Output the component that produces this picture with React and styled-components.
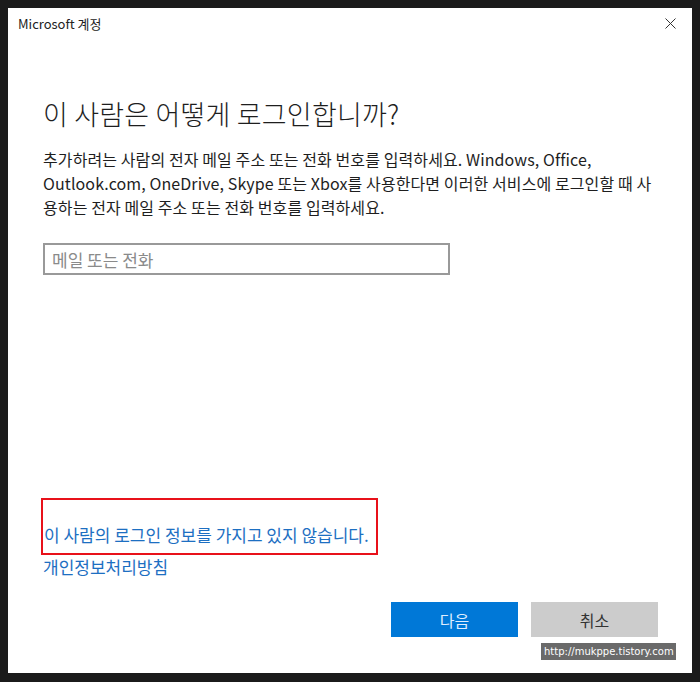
import React from "react";
import styled, { createGlobalStyle } from "styled-components";

const GlobalStyle = createGlobalStyle`
  html, body {
    margin: 0;
    padding: 0;
    background: #1b1b1b;
  }
  body {
    padding: 8px 8px 9px 8px;
    font-family: "Noto Sans CJK KR", "Noto Sans", sans-serif;
  }
`;

const Window = styled.div`
  position: relative;
  width: 684px;
  height: 665px;
  background: #ffffff;
  display: flex;
  flex-direction: column;
  box-sizing: border-box;
`;

const TitleBar = styled.div`
  height: 30px;
  display: flex;
  align-items: center;
  justify-content: space-between;
  padding: 0 16px 0 10px;
`;

const TitleText = styled.span`
  font-size: 13px;
  color: #222;
  margin-top: 1px;
`;

const CloseButton = styled.button`
  border: none;
  background: transparent;
  padding: 0;
  width: 12px;
  height: 12px;
  display: flex;
  align-items: center;
  justify-content: center;
`;

const Content = styled.div`
  flex: 1;
  display: flex;
  flex-direction: column;
  padding: 0 35px;
`;

const Heading = styled.h1`
  margin: 58px 0 0 0;
  font-size: 27px;
  line-height: 36px;
  font-weight: 300;
  letter-spacing: 0.2px;
  color: #1e1e1e;
`;

const Description = styled.p`
  margin: 15px 0 0 0;
  font-size: 16px;
  line-height: 24px;
  letter-spacing: 0.1px;
  white-space: nowrap;
  color: #1e1e1e;
`;

const EmailInput = styled.input`
  margin-top: 24px;
  width: 407px;
  height: 32px;
  box-sizing: border-box;
  border: 2px solid #999;
  padding: 0 7px;
  font-family: inherit;
  font-size: 17px;
  outline: none;
  &::placeholder {
    color: #8a8a8a;
  }
`;

const LinkArea = styled.div`
  margin-top: auto;
  display: flex;
  flex-direction: column;
`;

const Highlight = styled.div`
  width: 337px;
  box-sizing: border-box;
  border: 2px solid #e8111a;
  margin-left: -2px;
  padding: 23px 0 6px 1px;
`;

const TextLink = styled.a`
  font-size: 17px;
  line-height: 24px;
  color: #1d6fc2;
  text-decoration: none;
  cursor: pointer;
`;

const Footer = styled.div`
  display: flex;
  justify-content: flex-end;
  gap: 13px;
  padding: 23px 34px 36px 0;
`;

const Button = styled.button`
  width: 127px;
  height: 35px;
  border: none;
  font-family: inherit;
  font-size: 16px;
  background: ${({ primary }) => (primary ? "#0078d7" : "#cccccc")};
  color: ${({ primary }) => (primary ? "#dfeeff" : "#333")};
`;

const Watermark = styled.div`
  position: absolute;
  left: 533px;
  top: 635px;
  width: 135px;
  height: 17px;
  background: #6a6a6a;
  color: #fff;
  font-family: "DejaVu Sans", sans-serif;
  font-size: 10px;
  line-height: 17px;
  padding-left: 3px;
  box-sizing: border-box;
`;

const App = () => {
  return (
    <>
      <GlobalStyle />
      <Window>
        <TitleBar>
          <TitleText>Microsoft 계정</TitleText>
          <CloseButton aria-label="닫기">
            <svg width="11" height="11" viewBox="0 0 11 11">
              <path d="M0.5 0.5 L10.5 10.5 M10.5 0.5 L0.5 10.5" stroke="#333" strokeWidth="1" />
            </svg>
          </CloseButton>
        </TitleBar>
        <Content>
          <Heading>이 사람은 어떻게 로그인합니까?</Heading>
          <Description>
            추가하려는 사람의 전자 메일 주소 또는 전화 번호를 입력하세요. Windows, Office,
            <br />
            Outlook.com, OneDrive, Skype 또는 Xbox를 사용한다면 이러한 서비스에 로그인할 때 사
            <br />
            용하는 전자 메일 주소 또는 전화 번호를 입력하세요.
          </Description>
          <EmailInput placeholder="메일 또는 전화" />
          <LinkArea>
            <Highlight>
              <TextLink>이 사람의 로그인 정보를 가지고 있지 않습니다.</TextLink>
            </Highlight>
            <TextLink>개인정보처리방침</TextLink>
          </LinkArea>
        </Content>
        <Footer>
          <Button primary>다음</Button>
          <Button>취소</Button>
        </Footer>
        <Watermark>http://mukppe.tistory.com</Watermark>
      </Window>
    </>
  );
};

export default App;
